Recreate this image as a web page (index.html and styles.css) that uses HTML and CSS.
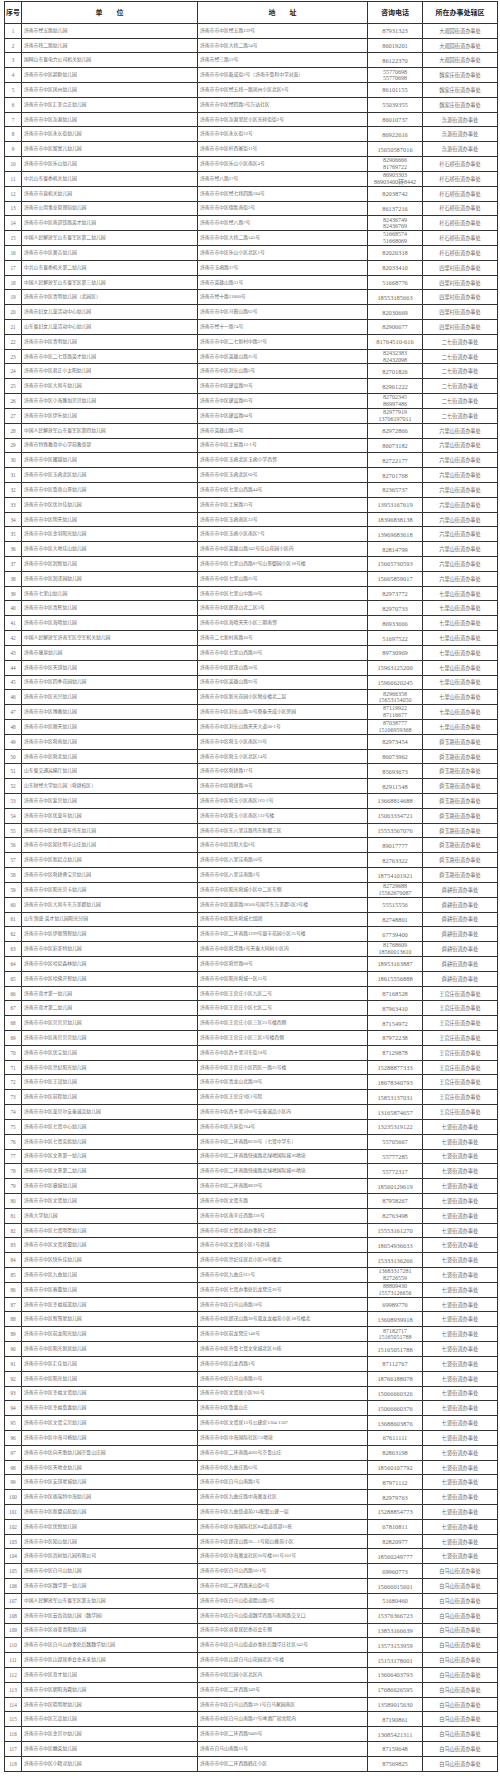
FILE: index.html
```html
<!DOCTYPE html>
<html lang="zh-CN">
<head>
<meta charset="utf-8">
<title>幼儿园名单</title>
<link rel="stylesheet" href="styles.css">
</head>
<body>
<table class="list">
<colgroup><col class="c-no"><col class="c-name"><col class="c-addr"><col class="c-tel"><col class="c-area"></colgroup>
<thead>
<tr class="head"><th>序号</th><th>单　　位</th><th>地　　址</th><th>咨询电话</th><th>所在办事处辖区</th></tr>
</thead>
<tbody>
<tr><td>1</td><td>济南市经五路幼儿园</td><td>济南市市中区经五路139号</td><td>87931323</td><td>大观园街道办事处</td></tr>
<tr><td>2</td><td>济南市纬二路幼儿园</td><td>济南市市中区大纬二路54号</td><td>86019201</td><td>大观园街道办事处</td></tr>
<tr><td>3</td><td>国网山东省电力公司机关幼儿园</td><td>济南市经三路12号</td><td>86122370</td><td>大观园街道办事处</td></tr>
<tr><td>4</td><td>济南市市中区超群幼儿园</td><td>济南市市中区乾成街2号（济南市鲁利中学对面）</td><td class="two">55770698<br>55770698</td><td>魏家庄街道办事处</td></tr>
<tr><td>5</td><td>济南市市中区凤州幼儿园</td><td>济南市市中区经五纬一路凤州小区北区6号</td><td>86101155</td><td>魏家庄街道办事处</td></tr>
<tr><td>6</td><td>济南市市中区汇美合正幼儿园</td><td>济南市市中区经四路5号万达社区</td><td>55039355</td><td>魏家庄街道办事处</td></tr>
<tr><td>7</td><td>济南市市中区泺源幼儿园</td><td>济南市市中区泺源里民小区光祥街街2号</td><td>86010737</td><td>泺源街道办事处</td></tr>
<tr><td>8</td><td>济南市市中区永长街幼儿园</td><td>济南市市中区永长街23号</td><td>86922616</td><td>泺源街道办事处</td></tr>
<tr><td>9</td><td>济南市市中区留寓儿幼儿园</td><td>济南市市中区杆西家街11号</td><td>15650587016</td><td>泺源街道办事处</td></tr>
<tr><td>10</td><td>济南市市中区乐山幼儿园</td><td>济南市市中区乐山小区南区4号</td><td class="two">82906666<br>81769722</td><td>杆石桥街道办事处</td></tr>
<tr><td>11</td><td>中共山东省委机关幼儿园</td><td>济南市经八路17号</td><td class="two">86903303<br>86903400转8442</td><td>杆石桥街道办事处</td></tr>
<tr><td>12</td><td>济南市市直机关幼儿园</td><td>济南市市中区经七纬四路184号</td><td>82038742</td><td>杆石桥街道办事处</td></tr>
<tr><td>13</td><td>济南市公用事业管理局幼儿园</td><td>济南市市中区德胜南街3号</td><td>86137216</td><td>杆石桥街道办事处</td></tr>
<tr><td>14</td><td>济南市市中区南郊铁路英才幼儿园</td><td>济南市市中区经八路7号</td><td class="two">82436749<br>82436769</td><td>杆石桥街道办事处</td></tr>
<tr><td>15</td><td>中国人民解放军山东省军区第二幼儿园</td><td>济南市市中区大纬二路145号</td><td class="two">51668574<br>51668069</td><td>杆石桥街道办事处</td></tr>
<tr><td>16</td><td>济南市市中区奥吉幼儿园</td><td>济南市市中区乐山小区北区1号</td><td>82026318</td><td>杆石桥街道办事处</td></tr>
<tr><td>17</td><td>中共山东省委机关第二幼儿园</td><td>济南市玉函路37号</td><td>82033410</td><td>四里村街道办事处</td></tr>
<tr><td>18</td><td>中国人民解放军山东省军区第三幼儿园</td><td>济南市英雄山路31号</td><td>51668776</td><td>四里村街道办事处</td></tr>
<tr><td>19</td><td>济南市市中区青明幼儿园（北园区）</td><td>济南市经十路21800号</td><td>18553185663</td><td>四里村街道办事处</td></tr>
<tr><td>20</td><td>济南市妇女儿童活动中心幼儿园</td><td>济南市市中区马鞍山路62号</td><td>82030669</td><td>四里村街道办事处</td></tr>
<tr><td>21</td><td>山东省妇女儿童活动中心幼儿园</td><td>济南市经十一路74号</td><td>82906677</td><td>四里村街道办事处</td></tr>
<tr><td>22</td><td>济南市市中区青明幼儿园</td><td>济南市市中区二七新村中路37号</td><td>81764510-616</td><td>二七街道办事处</td></tr>
<tr><td>23</td><td>济南市市中区二七铁路英才幼儿园</td><td>济南市市中区英雄山路25号</td><td class="two">82432383<br>82432098</td><td>二七街道办事处</td></tr>
<tr><td>24</td><td>济南市市中区君正小太阳幼儿园</td><td>济南市市中区刘长山路5号</td><td>82701826</td><td>二七街道办事处</td></tr>
<tr><td>25</td><td>济南市市中区大风车幼儿园</td><td>济南市市中区建设路93号</td><td>82961222</td><td>二七街道办事处</td></tr>
<tr><td>26</td><td>济南市市中区小海豚加贝贝幼儿园</td><td>济南市市中区建设路85号</td><td class="two">82702345<br>86997486</td><td>二七街道办事处</td></tr>
<tr><td>27</td><td>济南市市中区伊乐幼儿园</td><td>济南市市中区建设路84号</td><td class="two">82977919<br>13706197011</td><td>二七街道办事处</td></tr>
<tr><td>28</td><td>中国人民解放军山东省军区第四幼儿园</td><td>济南市英雄山路34号</td><td>82972866</td><td>六里山街道办事处</td></tr>
<tr><td>29</td><td>济南市特殊教育中心学前教育部</td><td>济南市市中区土屋路13-1号</td><td>86073182</td><td>六里山街道办事处</td></tr>
<tr><td>30</td><td>济南市市中区耀越幼儿园</td><td>济南市市中区玉函北区玉函小学西邻</td><td>82722177</td><td>六里山街道办事处</td></tr>
<tr><td>31</td><td>济南市市中区玉函北区幼儿园</td><td>济南市市中区玉函北区60号</td><td>82701768</td><td>六里山街道办事处</td></tr>
<tr><td>32</td><td>济南市市中区鲁商山景幼儿园</td><td>济南市市中区七里山西路44号</td><td>82365737</td><td>六里山街道办事处</td></tr>
<tr><td>33</td><td>济南市市中区优尔佳幼儿园</td><td>济南市市中区土屋路25号</td><td>13953167619</td><td>六里山街道办事处</td></tr>
<tr><td>34</td><td>济南市市中区明天幼儿园</td><td>济南市市中区玉函南区23号</td><td>18396838138</td><td>六里山街道办事处</td></tr>
<tr><td>35</td><td>济南市市中区金羽阳光幼儿园</td><td>济南市市中区玉函小区南区7号</td><td>13969683618</td><td>六里山街道办事处</td></tr>
<tr><td>36</td><td>济南市市中区大地佳山幼儿园</td><td>济南市市中区英雄山路342号佳山花园小区内</td><td>82814799</td><td>六里山街道办事处</td></tr>
<tr><td>37</td><td>济南市市中区润智幼儿园</td><td>济南市市中区七里山西路87号山景御园小区18号楼</td><td>15665730593</td><td>六里山街道办事处</td></tr>
<tr><td>38</td><td>济南市市中区润泽园幼儿园</td><td>济南市市中区七里山路25号</td><td>15665859017</td><td>六里山街道办事处</td></tr>
<tr><td>39</td><td>济南市七里山幼儿园</td><td>济南市市中区七里山中路20号</td><td>82973772</td><td>七里山街道办事处</td></tr>
<tr><td>40</td><td>济南市市中区青辉幼儿园</td><td>济南市市中区郎茂山北二区3号</td><td>82970733</td><td>七里山街道办事处</td></tr>
<tr><td>41</td><td>济南市市中区海晴幼儿园</td><td>济南市市中区海晴天天小区三期南邻</td><td>86933666</td><td>七里山街道办事处</td></tr>
<tr><td>42</td><td>中国人民解放军济南军区空军机关幼儿园</td><td>济南市二七新村南路10号</td><td>51697522</td><td>七里山街道办事处</td></tr>
<tr><td>43</td><td>济南市康泉幼儿园</td><td>济南市市中区七里山西路26号</td><td>89730969</td><td>七里山街道办事处</td></tr>
<tr><td>44</td><td>济南市市中区天琪幼儿园</td><td>济南市市中区郎茂山路18号</td><td>15963125200</td><td>七里山街道办事处</td></tr>
<tr><td>45</td><td>济南市市中区四季花园幼儿园</td><td>济南市市中区英雄山路93号</td><td>15966620245</td><td>七里山街道办事处</td></tr>
<tr><td>46</td><td>济南市市中区光兴幼儿园</td><td>济南市市中区新光花园小区物业楼北二层</td><td class="two">82966358<br>15653154050</td><td>七里山街道办事处</td></tr>
<tr><td>47</td><td>济南市市中区博雅幼儿园</td><td>济南市市中区刘长山路30号鼎泰天成小区旁园</td><td class="two">87119922<br>87116677</td><td>七里山街道办事处</td></tr>
<tr><td>48</td><td>济南市市中区顺天幼儿园</td><td>济南市市中区刘长山路天天大道30-1号</td><td class="two">87038777<br>15106959368</td><td>七里山街道办事处</td></tr>
<tr><td>49</td><td>济南市市中区舜南幼儿园</td><td>济南市市中区舜玉小区南区23号</td><td>82973454</td><td>舜玉路街道办事处</td></tr>
<tr><td>50</td><td>济南市市中区舜北幼儿园</td><td>济南市市中区舜玉小区北区14号</td><td>86073962</td><td>舜玉路街道办事处</td></tr>
<tr><td>51</td><td>山东省交通运输厅幼儿园</td><td>济南市市中区舜耕路17号</td><td>85693673</td><td>舜玉路街道办事处</td></tr>
<tr><td>52</td><td>山东财经大学幼儿园（舜耕校区）</td><td>济南市市中区舜耕路38号</td><td>82911548</td><td>舜玉路街道办事处</td></tr>
<tr><td>53</td><td>济南市市中区爱贝幼儿园</td><td>济南市市中区舜玉小区南区163-2号</td><td>13668814688</td><td>舜玉路街道办事处</td></tr>
<tr><td>54</td><td>济南市市中区优童年幼儿园</td><td>济南市市中区舜玉小区南区122号楼</td><td>15063334721</td><td>舜玉路街道办事处</td></tr>
<tr><td>55</td><td>济南市市中区金色童年伟东幼儿园</td><td>济南市市中区东八里洼路伟东新都三区</td><td>15553567076</td><td>舜玉路街道办事处</td></tr>
<tr><td>56</td><td>济南市市中区知往明丰山庄幼儿园</td><td>济南市市中区历阳大街6号</td><td>89017777</td><td>舜玉路街道办事处</td></tr>
<tr><td>57</td><td>济南市市中区新起点幼儿园</td><td>济南市市中区八里洼南路10号</td><td>82763322</td><td>舜玉路街道办事处</td></tr>
<tr><td>58</td><td>济南市市中区舜耕勇宝贝幼儿园</td><td>济南市市中区八里洼南路2号</td><td>18754101921</td><td>舜玉路街道办事处</td></tr>
<tr><td>59</td><td>济南市市中区阳光贝卡幼儿园</td><td>济南市市中区阳光舜城小区中二区东侧</td><td class="two">82729688<br>15562670087</td><td>舜耕街道办事处</td></tr>
<tr><td>60</td><td>济南市市中区大风车东方美郡幼儿园</td><td>济南市市中区旅游路28566号国华东方美郡5区2号楼</td><td>55515556</td><td>舜耕街道办事处</td></tr>
<tr><td>61</td><td>山东领盛·英才幼儿园阳光分园</td><td>济南市市中区阳光舜城七组团</td><td>82748801</td><td>舜耕街道办事处</td></tr>
<tr><td>62</td><td>济南市市中区伊顿慧智幼儿园</td><td>济南市市中区二环南路1299号银丰花园小区25号楼</td><td>67739400</td><td>舜耕街道办事处</td></tr>
<tr><td>63</td><td>济南市市中区彩美特幼儿园</td><td>济南市市中区舜湾路1号天泰大同树小区内</td><td class="two">81768609<br>18560013610</td><td>舜耕街道办事处</td></tr>
<tr><td>64</td><td>济南市市中区哈尼森林幼儿园</td><td>济南市市中区舜世路60号</td><td>18953163887</td><td>舜耕街道办事处</td></tr>
<tr><td>65</td><td>济南市市中区哈佛开智幼儿园</td><td>济南市市中区阳光舜城一区15号</td><td>18615556888</td><td>舜耕街道办事处</td></tr>
<tr><td>66</td><td>济南市育才第一幼儿园</td><td>济南市市中区王官庄小区九区二号</td><td>87168528</td><td>王官庄街道办事处</td></tr>
<tr><td>67</td><td>济南市育才第二幼儿园</td><td>济南市市中区王官庄小区七区二号</td><td>87963410</td><td>王官庄街道办事处</td></tr>
<tr><td>68</td><td>济南市市中区贝贝贝幼儿园</td><td>济南市市中区王官庄小区三区25号楼西侧</td><td>87154972</td><td>王官庄街道办事处</td></tr>
<tr><td>69</td><td>济南市市中区南贝贝贝幼儿园</td><td>济南市市中区王官庄小区三区3号楼西侧</td><td>87972238</td><td>王官庄街道办事处</td></tr>
<tr><td>70</td><td>济南市市中区优宝幼儿园</td><td>济南市市中区西十里河东街18号</td><td>87129878</td><td>王官庄街道办事处</td></tr>
<tr><td>71</td><td>济南市市中区世纪阳光幼儿园</td><td>济南市市中区王官庄小区四区一路25号楼</td><td>15288877333</td><td>王官庄街道办事处</td></tr>
<tr><td>72</td><td>济南市市中区王冠幼儿园</td><td>济南市市中区青龙山北路28号</td><td>18678340793</td><td>王官庄街道办事处</td></tr>
<tr><td>73</td><td>济南市市中区前程幼儿园</td><td>济南市市中区王官庄9区1号院</td><td>15853137031</td><td>王官庄街道办事处</td></tr>
<tr><td>74</td><td>济南市市中区童贝尔安泰诚品幼儿园</td><td>济南市市中区西十里河68号安泰诚品小区内</td><td>13165874657</td><td>王官庄街道办事处</td></tr>
<tr><td>75</td><td>济南市市中区七贤中心幼儿园</td><td>济南市市中区卉泉街704号</td><td>13235319122</td><td>七贤街道办事处</td></tr>
<tr><td>76</td><td>济南市市中区七贤实验幼儿园</td><td>济南市市中区二环南路8236号（七贤中学东）</td><td>55705667</td><td>七贤街道办事处</td></tr>
<tr><td>77</td><td>济南市市中区文景第一幼儿园</td><td>济南市市中区二环南路快速路北绿地国际城36地块</td><td>55777285</td><td>七贤街道办事处</td></tr>
<tr><td>78</td><td>济南市市中区文景第二幼儿园</td><td>济南市市中区二环南路快速路北绿地国际城81地块</td><td>55772317</td><td>七贤街道办事处</td></tr>
<tr><td>79</td><td>济南市市中区睿城幼儿园</td><td>济南市市中区二环南路8839号</td><td>18560129619</td><td>七贤街道办事处</td></tr>
<tr><td>80</td><td>济南市市中区文贤幼儿园</td><td>济南市市中区文贤东路</td><td>87958267</td><td>七贤街道办事处</td></tr>
<tr><td>81</td><td>济南大学幼儿园</td><td>济南市市中区南辛庄西路336号</td><td>82763498</td><td>七贤街道办事处</td></tr>
<tr><td>82</td><td>济南市市中区七贤明圣幼儿园</td><td>济南市市中区七贤街道办事处七贤庄</td><td>15553161270</td><td>七贤街道办事处</td></tr>
<tr><td>83</td><td>济南市市中区文贤居蕾幼儿园</td><td>济南市市中区文贤居小区1号商铺</td><td>18654936633</td><td>七贤街道办事处</td></tr>
<tr><td>84</td><td>济南市市中区快乐佳幼儿园</td><td>济南市市中区世纪佳居北小区20号楼北</td><td>15333136266</td><td>七贤街道办事处</td></tr>
<tr><td>85</td><td>济南市市中区九曲幼儿园</td><td>济南市市中区九曲庄611号</td><td class="two">13683317281<br>82726559</td><td>七贤街道办事处</td></tr>
<tr><td>86</td><td>济南市市中区春蕾幼儿园</td><td>济南市市中区七贤办事处后龙窝庄26号</td><td class="two">88809430<br>15573126656</td><td>七贤街道办事处</td></tr>
<tr><td>87</td><td>济南市市中区幸福摇篮幼儿园</td><td>济南市市中区白马山南路18号</td><td>69989776</td><td>七贤街道办事处</td></tr>
<tr><td>88</td><td>济南市市中区智慧星幼儿园</td><td>济南市市中区郎茂山路36号双龙龙福苑小区18号楼北</td><td>13608939918</td><td>七贤街道办事处</td></tr>
<tr><td>89</td><td>济南市市中区前龙阳光幼儿园</td><td>济南市市中区前龙窝庄148号</td><td class="two">87182717<br>15165051788</td><td>七贤街道办事处</td></tr>
<tr><td>90</td><td>济南市市中区阳光新居幼儿园</td><td>济南市市中区齐鲁七贤文化城北区16栋</td><td>15165051788</td><td>七贤街道办事处</td></tr>
<tr><td>91</td><td>济南市市中区汇佳幼儿园</td><td>济南市市中区后龙西路1号</td><td>87112767</td><td>七贤街道办事处</td></tr>
<tr><td>92</td><td>济南市市中区阳光幼儿园</td><td>济南市市中区白马山南路35号</td><td>18766188078</td><td>七贤街道办事处</td></tr>
<tr><td>93</td><td>济南市市中区幸福文贤幼儿园</td><td>济南市市中区文贤居小区901号</td><td>15066660326</td><td>七贤街道办事处</td></tr>
<tr><td>94</td><td>济南市市中区幸福鲁嘉幼儿园</td><td>济南市市中区鲁嘉山庄</td><td>15066660376</td><td>七贤街道办事处</td></tr>
<tr><td>95</td><td>济南市市中区文贤宝贝幼儿园</td><td>济南市市中区文贤居13号公建房1304-1307</td><td>13688603876</td><td>七贤街道办事处</td></tr>
<tr><td>96</td><td>济南市市中区中海可杨幼儿园</td><td>济南市市中区中海国际社区C2地块</td><td>67611111</td><td>七贤街道办事处</td></tr>
<tr><td>97</td><td>济南市市中区向天歌幼儿园京鲁山庄园</td><td>济南市市中区二环南路4666号京鲁山庄</td><td>82863198</td><td>七贤街道办事处</td></tr>
<tr><td>98</td><td>济南市市中区天地金幼儿园</td><td>济南市市中区九曲庄路63号</td><td>18560107792</td><td>七贤街道办事处</td></tr>
<tr><td>99</td><td>济南市市中区安琪星城幼儿园</td><td>济南市市中区白马山南路2号</td><td>87971112</td><td>七贤街道办事处</td></tr>
<tr><td>100</td><td>济南市市中区格瑞特中海幼儿园</td><td>济南市市中区九曲庄路中海奥龙社区</td><td>82979763</td><td>七贤街道办事处</td></tr>
<tr><td>101</td><td>济南市市中区新盟启航幼儿园</td><td>济南市市中区九曲铁道苑214配套公建一层</td><td>15288854773</td><td>七贤街道办事处</td></tr>
<tr><td>102</td><td>济南市市中区优悦幼儿园</td><td>济南市市中区中海国际社区B4街道首部21栋</td><td>67810811</td><td>七贤街道办事处</td></tr>
<tr><td>103</td><td>济南市市中区知山幼儿园</td><td>济南市市中区郎茂山路36—1号知山雅苑小区</td><td>82820977</td><td>七贤街道办事处</td></tr>
<tr><td>104</td><td>济南市市中区尚树幼儿园有限公司</td><td>济南市市中区中海奥龙社区66号楼101号102号</td><td>18560249777</td><td>七贤街道办事处</td></tr>
<tr><td>105</td><td>济南市市中区白马山幼儿园</td><td>济南市市中区白马山西路50-1号</td><td>69960773</td><td>白马山街道办事处</td></tr>
<tr><td>106</td><td>济南市市中区魏华第一幼儿园</td><td>济南市市中区二环西路米山街6号</td><td>15666015601</td><td>白马山街道办事处</td></tr>
<tr><td>107</td><td>中国人民解放军山东省军区第五幼儿园</td><td>济南市市中区白马山街道腊山路2号</td><td>51680460</td><td>白马山街道办事处</td></tr>
<tr><td>108</td><td>济南市市中区云尚尚幼儿园（魏华园）</td><td>济南市市中区白马山街道魏华西路与和风路交叉口</td><td>15376366723</td><td>白马山街道办事处</td></tr>
<tr><td>109</td><td>济南市市中区谷亚青阳幼儿园</td><td>济南市市中区谷亚居民委员会东侧</td><td>13853166639</td><td>白马山街道办事处</td></tr>
<tr><td>110</td><td>济南市市中区白马山办事处后魏魏华幼儿园</td><td>济南市市中区白马山街道办事处后魏华庄社区343号</td><td>13573153959</td><td>白马山街道办事处</td></tr>
<tr><td>111</td><td>济南市市中区山部居委会金未来幼儿园</td><td>济南市市中区山部白马山花园北区7号楼</td><td>15153178001</td><td>白马山街道办事处</td></tr>
<tr><td>112</td><td>济南市市中区育才幼儿园</td><td>济南市市中区红园小区北区内</td><td>13606403793</td><td>白马山街道办事处</td></tr>
<tr><td>113</td><td>济南市市中区朝阳海霞幼儿园</td><td>济南市市中区二环西路349号</td><td>17686626595</td><td>白马山街道办事处</td></tr>
<tr><td>114</td><td>济南市市中区晓明星幼儿园</td><td>济南市市中区白马山西路39-1号白马家园南区</td><td>13589015630</td><td>白马山街道办事处</td></tr>
<tr><td>115</td><td>济南市市中区艺品幼儿园</td><td>济南市市中区白马山南路27号啤酒厂宿舍院内</td><td>87190861</td><td>白马山街道办事处</td></tr>
<tr><td>116</td><td>济南市市中区金贝尔幼儿园</td><td>济南市市中区二环西路9406号</td><td>13685421311</td><td>白马山街道办事处</td></tr>
<tr><td>117</td><td>济南市市中区翰英幼儿园</td><td>济南市白马山南路15号</td><td>87159648</td><td>白马山街道办事处</td></tr>
<tr><td>118</td><td>济南市市中区小精灵幼儿园</td><td>济南市市中区二环西路韩庄小区</td><td>87569825</td><td>白马山街道办事处</td></tr>
</tbody>
</table>
</body>
</html>
```
FILE: styles.css
```css
html, body {
  margin: 0;
  padding: 0;
  background: #ffffff;
}

body {
  padding: 1px 0 0 4px;
  font-family: "Liberation Serif", "Noto Sans CJK SC", serif;
  color: #6a6a6a;
}

.list {
  width: 493px;
  table-layout: fixed;
  border-collapse: collapse;
  border: 1px solid #333333;
}

.c-no { width: 17px; }
.c-name { width: 176px; }
.c-addr { width: 170px; }
.c-tel { width: 55px; }
.c-area { width: 75px; }

.list th,
.list td {
  border: 1px solid #333333;
  padding: 0;
  overflow: hidden;
  white-space: nowrap;
  vertical-align: middle;
}

.list th {
  height: 20.8px;
  font-family: "Noto Sans CJK SC", sans-serif;
  font-size: 7px;
  font-weight: bold;
  color: #1e1e1e;
  text-align: center;
  line-height: 8px;
}

.list td {
  height: 13.82px;
  font-size: 4.8px;
  line-height: 6px;
}

.list td:nth-child(1) {
  text-align: center;
  font-size: 5.2px;
}

.list td:nth-child(2),
.list td:nth-child(3) {
  text-align: left;
  padding-left: 2px;
}

.list td:nth-child(4) {
  text-align: center;
  font-size: 6.4px;
  line-height: 7px;
}

.list td:nth-child(4).two {
  font-size: 6px;
  line-height: 6.6px;
}

.list td:nth-child(5) {
  text-align: center;
  font-size: 5.2px;
}
```
